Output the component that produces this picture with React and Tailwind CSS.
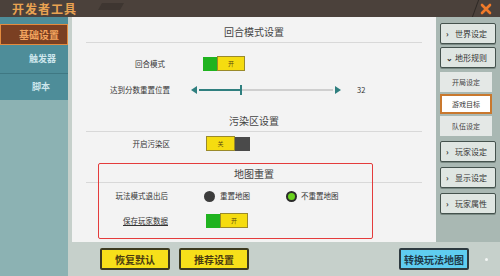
import React from 'react';

const font = { fontFamily: '"Noto Sans CJK SC", "Noto Sans", sans-serif' };

const Toggle = ({ on }) => {
  if (on) {
    return (
      <div className="flex items-center">
        <div className="w-[15px] h-[14px] bg-[#1fb31f]" />
        <div className="w-[28px] h-[15px] bg-[#f5dc10] border border-[#9a8a2a] flex items-center justify-center text-[6px] text-[#5a4a10] -ml-[1px]">
          开
        </div>
      </div>
    );
  }
  return (
    <div className="flex items-center">
      <div className="w-[29px] h-[15px] bg-[#f5dc10] border border-[#9a8a2a] flex items-center justify-center text-[6px] text-[#5a4a10]">
        关
      </div>
      <div className="w-[15px] h-[14px] bg-[#4a4a4a]" />
    </div>
  );
};

const SectionTitle = ({ children }) => (
  <div className="flex flex-col items-center">
    <div className="text-[10px] text-[#444] h-[14px] leading-[14px]">{children}</div>
  </div>
);

const Divider = () => <div className="mx-[14px] h-px bg-[#d8d8d8]" />;

const RightItem = ({ label, arrow }) => (
  <div className="mx-[4px] h-[21px] bg-[#dfe6e2] border border-[#44524d] rounded-[2px] flex items-center pl-[5px] gap-[4px] text-[8px] text-[#333] shadow-[0_1px_0_#7a8a84]">
    <span className="text-[8px] w-[5px] font-bold">{arrow}</span>
    <span>{label}</span>
  </div>
);

const SubItem = ({ label, active }) => (
  <div
    className={
      active
        ? 'mx-[4px] mr-[8px] h-[20px] bg-white border-2 border-[#c9782e] flex items-center justify-center text-[7px] text-[#333]'
        : 'mx-[4px] mr-[8px] h-[20px] bg-[#e4e8e6] flex items-center justify-center text-[7px] text-[#444]'
    }
  >
    {label}
  </div>
);

const YellowButton = ({ children }) => (
  <div className="w-[70px] h-[22px] bg-[#f7e01a] border-2 border-[#3d3a20] rounded-[2px] flex items-center justify-center text-[10px] font-bold text-[#4a3a10]">
    {children}
  </div>
);

export default function App() {
  return (
    <div className="w-[500px] h-[276px] overflow-hidden flex flex-col bg-[#c6d0cb]" style={font}>
      {/* title bar */}
      <div className="h-[17px] bg-[#4b413b] relative flex items-center justify-between px-[12px]">
        <span className="text-[12px] font-bold text-[#e9a352] tracking-[1px] leading-none">开发者工具</span>
        <div className="absolute left-[100px] top-[3px] w-[22px] h-[7px] bg-[#3e3631] skew-x-[-30deg]" />
        <div className="absolute right-[24px] top-0 w-px h-[17px] bg-[#2e2925] skew-x-[-20deg]" />
        <svg width="12" height="12" viewBox="0 0 12 12" className="mr-[-4px]">
          <path d="M2 2 L10 10 M10 2 L2 10" stroke="#f07a2a" strokeWidth="2.6" strokeLinecap="round" />
        </svg>
      </div>

      <div className="flex flex-1">
        {/* left sidebar */}
        <div className="w-[68px] flex flex-col bg-[#8cb2b3]">
          <div className="bg-[#4e8d99] pt-[7px] flex flex-col">
            <div className="h-[21px] bg-[#7a3f22] border border-[#e48b3e] flex items-center justify-end pr-[8px] text-[10px] font-bold text-[#f3a45e]">
              基础设置
            </div>
            <div className="h-[29px] border-b border-[#3f7883] flex items-center justify-end pr-[12px] text-[9px] font-bold text-[#cde6ec]">
              触发器
            </div>
            <div className="h-[26px] flex items-center justify-end pr-[18px] text-[9px] font-bold text-[#cde6ec]">
              脚本
            </div>
          </div>
        </div>

        <div className="flex-1 flex flex-col pl-[4px]">
          <div className="flex h-[225px]">
            {/* main panel */}
            <div className="w-[364px] bg-[#f3f3f3] flex flex-col pt-[8px] relative">
              <SectionTitle>回合模式设置</SectionTitle>
              <div className="mt-[3px]"><Divider /></div>

              <div className="flex items-center h-[15px] mt-[13px]">
                <div className="w-[93px] text-right text-[7.5px] text-[#333]">回合模式</div>
                <div className="ml-[38px]"><Toggle on /></div>
              </div>

              <div className="flex items-center h-[14px] mt-[12px]">
                <div className="w-[98px] text-right text-[7.5px] text-[#333]">达到分数重置位置</div>
                <div className="ml-[21px] flex items-center">
                  <svg width="6" height="8" viewBox="0 0 6 8"><path d="M6 0 L0 4 L6 8 Z" fill="#2f7f7f" /></svg>
                  <div className="relative w-[134px] h-[2px] bg-[#cfcfcf] ml-[2px]">
                    <div className="absolute left-0 top-0 h-[2px] w-[42px] bg-[#2f7f7f]" />
                    <div className="absolute left-[41px] top-[-4px] w-[2px] h-[10px] bg-[#2f7f7f]" />
                  </div>
                  <svg width="6" height="8" viewBox="0 0 6 8" className="ml-[2px]"><path d="M0 0 L6 4 L0 8 Z" fill="#2f7f7f" /></svg>
                  <span className="ml-[16px] text-[7.5px] text-[#333]">32</span>
                </div>
              </div>

              <div className="mt-[17px]"><SectionTitle>污染区设置</SectionTitle></div>
              <div className="mt-[3px]"><Divider /></div>

              <div className="flex items-center h-[15px] mt-[4px]">
                <div className="w-[98px] text-right text-[7.5px] text-[#333]">开启污染区</div>
                <div className="ml-[36px]"><Toggle on={false} /></div>
              </div>

              <div className="mt-[16px]"><SectionTitle>地图重置</SectionTitle></div>
              <div className="mt-[1px]"><Divider /></div>

              <div className="flex items-center h-[14px] mt-[6px] text-[7.5px] text-[#333]">
                <div className="w-[96px] text-right">玩法模式退出后</div>
                <div className="ml-[36px] w-[11px] h-[11px] rounded-full bg-[#3c3c3c]" />
                <span className="ml-[5px]">重置地图</span>
                <div className="ml-[36px] w-[11px] h-[11px] rounded-full bg-[#2b2b2b] flex items-center justify-center">
                  <div className="w-[7px] h-[7px] rounded-full bg-[#6ad21e]" />
                </div>
                <span className="ml-[4px]">不重置地图</span>
              </div>

              <div className="flex items-center h-[15px] mt-[10px]">
                <div className="w-[96px] text-right text-[7.5px] text-[#333] underline">保存玩家数据</div>
                <div className="ml-[38px]"><Toggle on /></div>
              </div>

              {/* red annotation box */}
              <div className="absolute left-[26px] top-[146px] w-[275px] h-[76px] border-[1.5px] border-[#e43b3b] rounded-[2px] pointer-events-none" />
            </div>

            {/* right sidebar */}
            <div className="flex-1 bg-[#a9b8b3] flex flex-col pt-[6px] gap-[3px]">
              <RightItem arrow="›" label="世界设定" />
              <RightItem arrow="⌄" label="地形规则" />
              <div className="flex flex-col gap-[2px] mt-[1px]">
                <SubItem label="开局设定" />
                <SubItem label="游戏目标" active />
                <SubItem label="队伍设定" />
              </div>
              <div className="mt-[2px] flex flex-col gap-[5px]">
                <RightItem arrow="›" label="玩家设定" />
                <RightItem arrow="›" label="显示设定" />
                <RightItem arrow="›" label="玩家属性" />
              </div>
            </div>
          </div>

          {/* bottom bar */}
          <div className="flex-1 flex items-center pl-[28px] pr-[12px]">
            <YellowButton>恢复默认</YellowButton>
            <div className="ml-[9px]"><YellowButton>推荐设置</YellowButton></div>
            <div className="ml-auto w-[70px] h-[22px] bg-[#5fcdf0] border-2 border-[#2e3a40] rounded-[2px] flex items-center justify-center text-[10px] font-bold text-[#1e3a4a]">
              转换玩法地图
            </div>
            <div className="ml-[16px] w-[3px] h-[3px] rounded-full bg-white/80" />
          </div>
        </div>
      </div>
    </div>
  );
}
